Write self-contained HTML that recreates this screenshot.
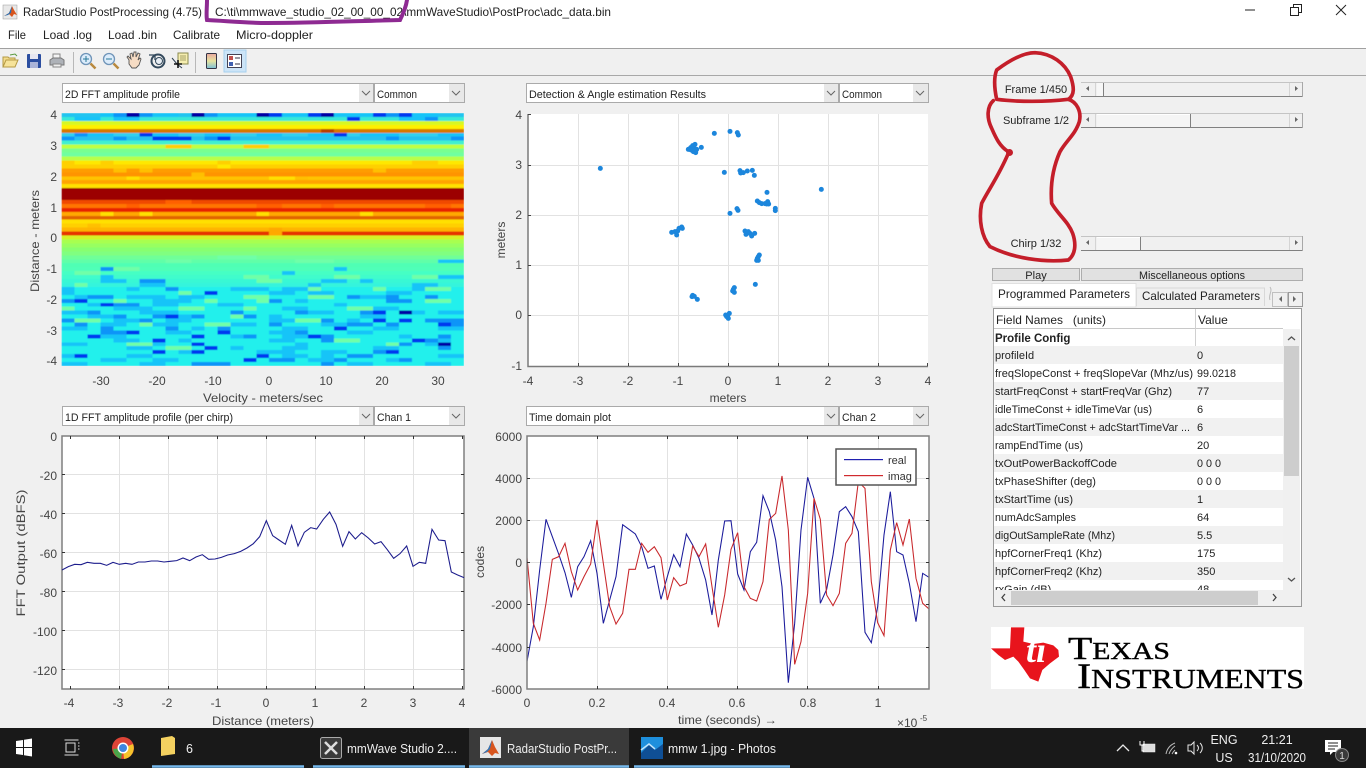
<!DOCTYPE html>
<html lang="en"><head><meta charset="utf-8"><title>RadarStudio PostProcessing</title>
<style>
html,body{margin:0;padding:0;width:1366px;height:768px;overflow:hidden;background:#f0f0f0}
svg{display:block}
text{font-family:"Liberation Sans",sans-serif}
.t{font-size:12px;fill:#444}
.d{font-size:11px;fill:#222}
.r{text-anchor:end}
.m{text-anchor:middle}
.c{font-size:11px;fill:#222}
.w{fill:#eee;font-size:12.5px}
.s{font-family:"Liberation Serif",serif}
</style></head><body>
<svg width="1366" height="768" viewBox="0 0 1366 768" xmlns="http://www.w3.org/2000/svg">
<defs>
<clipPath id="rowclip"><rect x="994" y="328" width="289" height="262"/></clipPath>
<clipPath id="plot2"><rect x="527" y="436" width="402" height="253"/></clipPath>
<clipPath id="hm"><rect x="61.500" y="113" width="402.500" height="253"/></clipPath>
<filter id="soft" x="-2%" y="-2%" width="104%" height="104%"><feGaussianBlur stdDeviation=".45"/></filter>
<g id="arrow"><path d="M-4-2l4 4 4-4" fill="none" stroke="#666" stroke-width="1"/></g>
</defs>

<!-- window chrome -->
<rect x="0" y="0" width="1366" height="48" fill="#fff"/>
<rect x="0" y="48" width="1366" height="1" fill="#a0a0a0"/>
<rect x="0" y="75" width="1366" height="1" fill="#a8a8a8"/>
<rect x="3" y="5" width="14" height="14" fill="#e8e8e8" stroke="#999" stroke-width=".5"/>
<path d="M4 16l5-3 3-7 2 4 3 5-3-1-2 3-3-3z" fill="#d8551e"/><path d="M4 16l5-3 3-7-1 7-3 2z" fill="#2a6fb0"/>
<text x="23" y="16" font-size="12" fill="#222" textLength="179" lengthAdjust="spacingAndGlyphs">RadarStudio PostProcessing (4.75)</text>
<text x="215" y="16" font-size="12" fill="#222" textLength="396" lengthAdjust="spacingAndGlyphs">C:\ti\mmwave_studio_02_00_00_02\mmWaveStudio\PostProc\adc_data.bin</text>
<path d="M1245 10h10" stroke="#222" stroke-width="1"/>
<path d="M1290.5 7.500h8v8h-8zM1293.500 7.500v-3h8v8h-3" fill="none" stroke="#222"/>
<path d="M1336 5l10 10M1346 5l-10 10" stroke="#222" stroke-width="1"/>
<g font-size="12" fill="#222">
<text x="8" y="39" textLength="18" lengthAdjust="spacingAndGlyphs">File</text>
<text x="43" y="39" textLength="49" lengthAdjust="spacingAndGlyphs">Load .log</text>
<text x="108" y="39" textLength="49" lengthAdjust="spacingAndGlyphs">Load .bin</text>
<text x="173" y="39" textLength="47" lengthAdjust="spacingAndGlyphs">Calibrate</text>
<text x="236" y="39" textLength="77" lengthAdjust="spacingAndGlyphs">Micro-doppler</text>
</g>

<!-- toolbar -->
<path d="M3 67V57h5l1 1h6v2" fill="#f3dc8c" stroke="#b59a45"/><path d="M3 67l3-7h12l-3 7z" fill="#f6e39a" stroke="#b59a45"/><path d="M10 55l5-1 2 2" fill="none" stroke="#5a9a40"/>
<rect x="27" y="54" width="14" height="14" rx="1" fill="#2b4ea0"/><rect x="30" y="54" width="8" height="5" fill="#e6e6f0"/><rect x="30" y="62" width="8" height="6" fill="#aab4d8"/>
<path d="M53 54h7v5h-7z" fill="#f4f4f4" stroke="#888"/><path d="M50 60l3-2h8l3 2v5H50z" fill="#aeb2b8" stroke="#777"/><path d="M53 64h8v3h-8z" fill="#eee" stroke="#888"/>
<rect x="73" y="52" width="1" height="21" fill="#b8b8b8"/>
<g fill="none"><circle cx="86" cy="59" r="5.500" fill="#dcecfb" stroke="#6f94b8" stroke-width="1.300"/><path d="M83 59h6M86 56v6" stroke="#2a7a9a"/><path d="M90.500 63.500l5 5" stroke="#b8893f" stroke-width="2.500"/></g>
<g fill="none"><circle cx="109" cy="59" r="5.500" fill="#dcecfb" stroke="#6f94b8" stroke-width="1.300"/><path d="M106 59h6" stroke="#2a7a9a"/><path d="M113.500 63.500l5 5" stroke="#b8893f" stroke-width="2.500"/></g>
<path d="M129 60l-2-3 1-1 3 3-1-5 2-1 1 4 1-5 2 0v5l2-4 2 1-2 6 2-2 1 1-2 6-3 3h-4l-3-4z" fill="#f6dcc4" stroke="#555" stroke-width=".9"/>
<circle cx="158" cy="61" r="6.500" fill="none" stroke="#33495c" stroke-width="2"/><circle cx="159" cy="61" r="3.500" fill="#e8eef4" stroke="#33495c"/><path d="M149 55h6v5" fill="none" stroke="#33495c" stroke-width="1.300"/>
<rect x="178" y="53" width="10" height="11" fill="#f6eeb0" stroke="#8a8a50"/><path d="M180 56h6M180 58h6M180 60h6" stroke="#8a8a50" stroke-width=".7"/><path d="M172 58l5 6 5 4" stroke="#345" fill="none"/><path d="M178 60v8M174 64h8" stroke="#111" stroke-width="1.600"/>
<rect x="195" y="52" width="1" height="21" fill="#b8b8b8"/>
<defs><linearGradient id="cb" x1="0" y1="0" x2="0" y2="1"><stop offset="0" stop-color="#e9a8a0"/><stop offset=".5" stop-color="#e8e4a0"/><stop offset="1" stop-color="#7cc0d8"/></linearGradient></defs>
<rect x="206.500" y="53.500" width="10" height="15" rx="1" fill="url(#cb)" stroke="#334"/>
<rect x="224" y="50" width="22" height="22" fill="#cce4f7" stroke="#a6cfee"/>
<rect x="227.500" y="54.500" width="14" height="13" fill="#fff" stroke="#445"/><rect x="229" y="56" width="4" height="4" fill="#c0504d"/><rect x="229" y="62" width="4" height="4" fill="#4060b0"/><path d="M235 58h5M235 64h5" stroke="#334"/>

<!-- dropdowns -->
<g fill="#fff" stroke="#aaa">
<rect x="62.500" y="83.500" width="311" height="19"/><rect x="374.500" y="83.500" width="90" height="19"/>
<rect x="526.500" y="83.500" width="312" height="19"/><rect x="839.500" y="83.500" width="89" height="19"/>
<rect x="62.500" y="406.500" width="311" height="19"/><rect x="374.500" y="406.500" width="90" height="19"/>
<rect x="526.500" y="406.500" width="312" height="19"/><rect x="839.500" y="406.500" width="89" height="19"/>
</g>
<g fill="#e8e8e8"><rect x="359" y="84" width="14" height="18"/><rect x="449" y="84" width="15" height="18"/><rect x="824" y="84" width="14" height="18"/><rect x="913" y="84" width="15" height="18"/><rect x="359" y="407" width="14" height="18"/><rect x="449" y="407" width="15" height="18"/><rect x="824" y="407" width="14" height="18"/><rect x="913" y="407" width="15" height="18"/></g>
<use href="#arrow" x="366" y="93"/><use href="#arrow" x="456" y="93"/><use href="#arrow" x="831" y="93"/><use href="#arrow" x="920" y="93"/>
<use href="#arrow" x="366" y="416"/><use href="#arrow" x="456" y="416"/><use href="#arrow" x="831" y="416"/><use href="#arrow" x="920" y="416"/>
<g class="d">
<text class="d" x="65" y="98" textLength="115" lengthAdjust="spacingAndGlyphs">2D FFT amplitude profile</text>
<text class="d" x="377" y="98" textLength="40" lengthAdjust="spacingAndGlyphs">Common</text>
<text class="d" x="529" y="98" textLength="177" lengthAdjust="spacingAndGlyphs">Detection &amp; Angle estimation Results</text>
<text class="d" x="842" y="98" textLength="40" lengthAdjust="spacingAndGlyphs">Common</text>
<text class="d" x="65" y="421" textLength="168" lengthAdjust="spacingAndGlyphs">1D FFT amplitude profile (per chirp)</text>
<text class="d" x="377" y="421" textLength="34" lengthAdjust="spacingAndGlyphs">Chan 1</text>
<text class="d" x="529" y="421" textLength="82" lengthAdjust="spacingAndGlyphs">Time domain plot</text>
<text class="d" x="842" y="421" textLength="34" lengthAdjust="spacingAndGlyphs">Chan 2</text>
</g>

<!-- heatmap -->
<g clip-path="url(#hm)"><g filter="url(#soft)">
<svg x="61.500" y="113" width="402.500" height="253" viewBox="0 0 31 64" preserveAspectRatio="none" shape-rendering="crispEdges">
<g>
<rect y="0" width="31" height="1" fill="#22c4f0"/><rect y="1" width="31" height="1" fill="#38e8d8"/><rect y="2" width="31" height="1" fill="#d8f820"/><rect y="3" width="31" height="1" fill="#fff000"/><rect y="4" width="31" height="1" fill="#d87800"/><rect y="5" width="31" height="1" fill="#30d0f0"/><rect y="6" width="31" height="1" fill="#28c0f0"/><rect y="7" width="31" height="1" fill="#40f0d0"/>
<rect y="8" width="31" height="1" fill="#c0ff40"/><rect y="9" width="31" height="1" fill="#78ff90"/><rect y="10" width="31" height="1" fill="#70ffa0"/><rect y="11" width="31" height="1" fill="#b8ff48"/><rect y="12" width="31" height="1" fill="#ffe800"/><rect y="13" width="31" height="1" fill="#ffd000"/><rect y="14" width="31" height="1" fill="#ff9c00"/><rect y="15" width="31" height="1" fill="#ff9400"/>
<rect y="16" width="31" height="1" fill="#ffc400"/><rect y="17" width="31" height="1" fill="#ffa400"/><rect y="18" width="31" height="1" fill="#ffe000"/><rect y="19" width="31" height="3" fill="#9c0000"/><rect y="22" width="31" height="1" fill="#f04800"/><rect y="23" width="31" height="1" fill="#ff7400"/>
<rect y="24" width="31" height="1" fill="#e82400"/><rect y="25" width="31" height="1" fill="#ffa800"/><rect y="26" width="31" height="1" fill="#e06400"/><rect y="27" width="31" height="1" fill="#ffe000"/><rect y="28" width="31" height="1" fill="#ffd000"/><rect y="29" width="31" height="1" fill="#ffb400"/><rect y="30" width="31" height="1" fill="#e63000"/><rect y="31" width="31" height="1" fill="#d4f428"/>
<rect y="32" width="31" height="1" fill="#a8ff50"/><rect y="33" width="31" height="1" fill="#98ff60"/><rect y="34" width="31" height="1" fill="#88ff70"/><rect y="35" width="31" height="1" fill="#80ff80"/><rect y="36" width="31" height="1" fill="#70ff98"/><rect y="37" width="31" height="1" fill="#60ffa8"/><rect y="38" width="31" height="1" fill="#50ffb4"/><rect y="39" width="31" height="1" fill="#50ffb8"/>
<rect y="40" width="31" height="1" fill="#44ffc4"/><rect y="41" width="31" height="1" fill="#40fccc"/><rect y="42" width="31" height="1" fill="#38f8d4"/><rect y="43" width="31" height="1" fill="#34f4dc"/><rect y="44" width="31" height="22" fill="#24f0ec"/>
</g>
<g fill="none" stroke-width="1">
<path stroke="#70ffa8" d="M8 37.500h2M12 36.500h3M18 37.500h3M4 39.500h2M1 40.500h2M14 41.500h2M21 41.500h2M27 41.500h2M15 42.500h2M1 43.500h1M18 44.500h2M24 44.500h1M9 45.500h1M28 44.500h2M14 46.500h2M19 46.500h2M4 47.500h1M11 47.500h1M15 47.500h1M0 49.500h1M9 49.500h2M14 49.500h1M22 49.500h2M13 51.500h2M18 52.500h2M28 47.500h2M1 52.500h2M6 53.500h1M11 53.500h2M21 57.500h2M5 58.500h2M8 59.500h2M25 58.500h2"/>
<path stroke="#18c4f8" d="M3 0.500h1M7 0.500h2M12 0.500h3M17 0.500h2M21 0.500h3M27 0.500h2M1 1.500h2M4 1.500h2M22 1.500h1M26 1.500h3M2 5.500h2M7 5.500h2M15 5.500h2M19 5.500h2M23 5.500h3M29 5.500h2M11 5.500h2M3 41.500h1M29 37.500h2M21 39.500h1M17 40.500h1M3 42.500h2M23 42.500h1M29 41.500h2M6 43.500h2M17 44.500h2M20 42.500h2M27 43.500h2M19 43.500h1M0 44.500h1M5 44.500h1M27 44.500h1M0 45.500h1M9 46.500h2M13 44.500h3M19 45.500h2M25 45.500h2M1 46.500h2M5 46.500h3M16 45.500h2M23 46.500h2M7 47.500h3M18 47.500h1M2 48.500h1M7 48.500h2M12 48.500h2M21 48.500h1M4 49.500h3M17 49.500h2M24 49.500h2M0 50.500h2M6 50.500h3M19 50.500h2M26 50.500h2M29 50.500h2M2 51.500h2M9 51.500h2M16 51.500h1M23 51.500h2M4 52.500h2M8 52.500h2M16 52.500h2M22 52.500h1M3 53.500h2M7 53.500h2M13 53.500h2M20 53.500h2M29 54.500h2M0 54.500h2M10 54.500h1M17 54.500h2M24 54.500h2M8 55.500h2M16 55.500h2M22 55.500h2M3 56.500h2M13 56.500h2M17 56.500h2M26 56.500h1M4 57.500h2M9 57.500h1M16 57.500h2M29 57.500h1M0 58.500h2M7 58.500h1M18 58.500h1M28 58.500h1M5 59.500h2M13 59.500h1M17 59.500h2M24 59.500h2M9 60.500h2M15 60.500h3M20 60.500h2M0 61.500h1M5 61.500h2M17 61.500h2M20 61.500h1M29 61.500h2M3 62.500h2M7 62.500h2M19 62.500h2M25 62.500h1M0 63.500h2M6 63.500h2M22 63.500h2M28 63.500h2"/>
<path stroke="#0c94f8" d="M4 0.500h1M6 0.500h1M11 0.500h1M25 0.500h1M28 1.500h1M0 6.500h1M1 5.500h1M4 6.500h1M11 6.500h1M25 6.500h1M30 6.500h1M3 39.500h1M6 42.500h2M8 44.500h1M0 47.500h1M2 46.500h2M22 46.500h1M25 47.500h2M28 46.500h1M4 48.500h2M16 47.500h1M25 46.500h1M13 50.500h1M2 50.500h1M4 51.500h1M7 51.500h2M10 51.500h1M14 51.500h1M18 50.500h1M23 50.500h1M29 52.500h2M0 52.500h1M1 53.500h1M6 52.500h1M16 53.500h1M20 52.500h1M25 53.500h1M28 52.500h1M30 53.500h1M3 54.500h1M8 54.500h1M12 54.500h1M22 53.500h2M3 55.500h2M14 56.500h1M18 55.500h1M29 56.500h1M20 56.500h1M20 57.500h1M28 57.500h1M26 58.500h1M29 59.500h1M24 60.500h1M22 61.500h2M26 62.500h1M10 63.500h3M16 62.500h2M21 62.500h1M20 63.500h1"/>
<path stroke="#0038f0" d="M16 0.500h1M19 0.500h1M24 0.500h1M26 0.500h1M22 1.500h1M21 5.500h1M6 5.500h1M7 6.500h3M12 6.500h1M11 45.500h1M1 47.500h1M3 48.500h1M8 51.500h1M24 50.500h1M24 52.500h1M26 52.500h1M21 54.500h1M2 56.500h1M5 55.500h1M7 57.500h1M10 56.500h1M12 55.500h1M19 56.500h1M27 57.500h1M10 58.500h1M11 59.500h1M7 60.500h1M10 60.500h1M1 61.500h1M15 61.500h1M14 62.500h1M25 60.500h1M29 53.500h1"/>
<path stroke="#0000a4" d="M5 0.500h1M10 0.500h1M15 0.500h1M20 0.500h1M26 50.500h1M29 58.500h1"/>
<path stroke="#ffa800" d="M16 29.500h1M16 30.500h1"/>
<path stroke="#ffc000" d="M2 28.500h1M6 14.500h1M4 14.500h1M10 15.500h1M18 16.500h1M24 14.500h1"/>
<path stroke="#ff6000" d="M5 23.500h1M15 23.500h2M20 23.500h1M28 23.500h2M8 22.500h2"/>
<path stroke="#ffe000" d="M3 25.500h1M15 25.500h1M23 25.500h1M6 25.500h1M5 16.500h1M16 16.500h2"/>
<path stroke="#ffe800" d="M12 13.500h1M7 12.500h1M22 12.500h2"/>
<path stroke="#ffd000" d="M0 12.500h1M3 12.500h1M12 12.500h1M27 12.500h2M8 8.500h2M14 8.500h2"/>
<path stroke="#b84000" d="M20 4.500h1"/>
</g>
</svg>
</g></g>
<g class="t">
<text class="t r" x="57" y="119">4</text><text class="t r" x="57" y="150">3</text><text class="t r" x="57" y="181">2</text><text class="t r" x="57" y="212">1</text><text class="t r" x="57" y="242">0</text><text class="t r" x="57" y="273">-1</text><text class="t r" x="57" y="304">-2</text><text class="t r" x="57" y="335">-3</text><text class="t r" x="57" y="365">-4</text>
<text class="t m" x="101" y="385">-30</text><text class="t m" x="157" y="385">-20</text><text class="t m" x="213" y="385">-10</text><text class="t m" x="269" y="385">0</text><text class="t m" x="326" y="385">10</text><text class="t m" x="382" y="385">20</text><text class="t m" x="438" y="385">30</text>
<text class="t m" x="263" y="402" textLength="120" lengthAdjust="spacingAndGlyphs">Velocity - meters/sec</text>
<text class="t m" transform="translate(39,241) rotate(-90)" textLength="102" lengthAdjust="spacingAndGlyphs">Distance - meters</text>
</g>

<!-- scatter plot -->
<rect x="528" y="114" width="400" height="252" fill="#fff"/>
<path d="M578.500 114v252M628.500 114v252M678.500 114v252M728.500 114v252M778.500 114v252M828.500 114v252M878.500 114v252M528 165.500h400M528 215.500h400M528 265.500h400M528 315.500h400" stroke="#e2e2e2" fill="none"/>
<path d="M528 114v252.500h400" stroke="#7a7a7a" stroke-width="1.500" fill="none"/>
<path d="M528 114.500h3M528 165.500h3M528 215.500h3M528 265.500h3M528 315.500h3M578.500 366v-3M628.500 366v-3M678.500 366v-3M728.500 366v-3M778.500 366v-3M828.500 366v-3M878.500 366v-3M927.500 366v-3" stroke="#444"/>
<g fill="#1c86dc" transform="translate(500,105) scale(.33333)">
<circle cx="301" cy="190" r="7.500"/><circle cx="643" cy="85" r="7.500"/><circle cx="690" cy="79" r="7.500"/><circle cx="712" cy="83" r="7.500"/><circle cx="715" cy="90" r="7.500"/><circle cx="604" cy="127" r="7.500"/><circle cx="565" cy="133" r="7.500"/><circle cx="572" cy="128" r="7.500"/><circle cx="578" cy="122" r="7.500"/><circle cx="585" cy="118" r="7.500"/><circle cx="573" cy="135" r="7.500"/><circle cx="580" cy="140" r="7.500"/><circle cx="587" cy="143" r="7.500"/><circle cx="583" cy="130" r="7.500"/><circle cx="590" cy="133" r="7.500"/><circle cx="673" cy="202" r="7.500"/><circle cx="720" cy="197" r="7.500"/><circle cx="722" cy="204" r="7.500"/><circle cx="730" cy="203" r="7.500"/><circle cx="742" cy="198" r="7.500"/><circle cx="757" cy="196" r="7.500"/><circle cx="763" cy="211" r="7.500"/><circle cx="801" cy="262" r="7.500"/><circle cx="964" cy="253" r="7.500"/><circle cx="772" cy="288" r="7.500"/><circle cx="778" cy="293" r="7.500"/><circle cx="785" cy="296" r="7.500"/><circle cx="795" cy="296" r="7.500"/><circle cx="803" cy="290" r="7.500"/><circle cx="800" cy="297" r="7.500"/><circle cx="806" cy="297" r="7.500"/><circle cx="826" cy="310" r="7.500"/><circle cx="826" cy="317" r="7.500"/><circle cx="690" cy="325" r="7.500"/><circle cx="711" cy="311" r="7.500"/><circle cx="714" cy="316" r="7.500"/><circle cx="515" cy="382" r="7.500"/><circle cx="525" cy="380" r="7.500"/><circle cx="530" cy="390" r="7.500"/><circle cx="533" cy="378" r="7.500"/><circle cx="537" cy="370" r="7.500"/><circle cx="545" cy="366" r="7.500"/><circle cx="547" cy="370" r="7.500"/><circle cx="735" cy="378" r="7.500"/><circle cx="745" cy="380" r="7.500"/><circle cx="738" cy="388" r="7.500"/><circle cx="750" cy="385" r="7.500"/><circle cx="755" cy="393" r="7.500"/><circle cx="764" cy="385" r="7.500"/><circle cx="778" cy="450" r="7.500"/><circle cx="775" cy="455" r="7.500"/><circle cx="772" cy="460" r="7.500"/><circle cx="770" cy="466" r="7.500"/><circle cx="775" cy="466" r="7.500"/><circle cx="766" cy="538" r="7.500"/><circle cx="703" cy="548" r="7.500"/><circle cx="700" cy="553" r="7.500"/><circle cx="698" cy="558" r="7.500"/><circle cx="703" cy="562" r="7.500"/><circle cx="578" cy="571" r="7.500"/><circle cx="583" cy="574" r="7.500"/><circle cx="576" cy="575" r="7.500"/><circle cx="592" cy="583" r="7.500"/><circle cx="688" cy="625" r="7.500"/><circle cx="683" cy="632" r="7.500"/><circle cx="680" cy="635" r="7.500"/><circle cx="685" cy="640" r="7.500"/><circle cx="677" cy="630" r="7.500"/>
</g>
<g>
<text class="t r" x="522" y="119">4</text><text class="t r" x="522" y="169">3</text><text class="t r" x="522" y="219">2</text><text class="t r" x="522" y="269">1</text><text class="t r" x="522" y="319">0</text><text class="t r" x="522" y="370">-1</text>
<text class="t m" x="528" y="385">-4</text><text class="t m" x="578" y="385">-3</text><text class="t m" x="628" y="385">-2</text><text class="t m" x="678" y="385">-1</text><text class="t m" x="728" y="385">0</text><text class="t m" x="778" y="385">1</text><text class="t m" x="828" y="385">2</text><text class="t m" x="878" y="385">3</text><text class="t m" x="928" y="385">4</text>
<text class="t m" x="728" y="402">meters</text>
<text class="t m" transform="translate(505,240) rotate(-90)">meters</text>
</g>

<!-- FFT plot -->
<rect x="62" y="436" width="402" height="253" fill="#fff"/>
<path d="M119.500 436v253M168.500 436v253M217.500 436v253M266.500 436v253M315.500 436v253M364.500 436v253M413.500 436v253M62 474.500h402M62 513.500h402M62 552.500h402M62 591.500h402M62 630.500h402M62 669.500h402" stroke="#e2e2e2" fill="none"/>
<rect x="62" y="436" width="402" height="253" fill="none" stroke="#7f7f7f" stroke-width="1.500"/>
<path d="M70.500 436v3M119.500 436v3M168.500 436v3M217.500 436v3M266.500 436v3M315.500 436v3M364.500 436v3M413.500 436v3M462.500 436v3M70.500 689v-3M119.500 689v-3M168.500 689v-3M217.500 689v-3M266.500 689v-3M315.500 689v-3M364.500 689v-3M413.500 689v-3M462.500 689v-3M62 474.500h3M62 513.500h3M62 552.500h3M62 591.500h3M62 630.500h3M62 669.500h3M464 474.500h-3M464 513.500h-3M464 552.500h-3M464 591.500h-3M464 630.500h-3M464 669.500h-3" stroke="#333" fill="none"/>
<polyline transform="translate(30,425) scale(.33333)" fill="none" stroke="#1c1c8c" stroke-width="3.200" points="96,435 115,425 134,418 153,419 172,412 192,415 211,415 230,421 249,412 268,418 287,415 306,418 325,411 345,411 364,408 383,408 402,411 421,409 440,407 459,399 479,407 498,396 517,389 536,403 555,402 574,397 593,390 613,386 632,379 651,369 670,356 689,335 709,287 728,332 747,345 766,358 785,301 804,363 823,322 842,308 860,312 880,283 899,261 918,298 938,364 957,320 976,342 995,323 1015,339 1034,357 1053,350 1072,374 1091,400 1110,386 1130,363 1149,424 1168,412 1187,415 1206,313 1226,345 1245,347 1264,441 1283,450 1302,458"/>
<g>
<text class="t r" x="57" y="441">0</text><text class="t r" x="57" y="480">-20</text><text class="t r" x="57" y="519">-40</text><text class="t r" x="57" y="558">-60</text><text class="t r" x="57" y="597">-80</text><text class="t r" x="57" y="636">-100</text><text class="t r" x="57" y="675">-120</text>
<text class="t m" x="69" y="707">-4</text><text class="t m" x="118" y="707">-3</text><text class="t m" x="167" y="707">-2</text><text class="t m" x="216" y="707">-1</text><text class="t m" x="266" y="707">0</text><text class="t m" x="315" y="707">1</text><text class="t m" x="364" y="707">2</text><text class="t m" x="413" y="707">3</text><text class="t m" x="462" y="707">4</text>
<text class="t m" x="263" y="725" textLength="102" lengthAdjust="spacingAndGlyphs">Distance (meters)</text>
<text class="t m" transform="translate(25,553) rotate(-90)" textLength="127" lengthAdjust="spacingAndGlyphs">FFT Output (dBFS)</text>
</g>

<!-- time plot -->
<rect x="527" y="436" width="402" height="253" fill="#fff"/>
<path d="M597.500 436v253M667.500 436v253M737.500 436v253M807.500 436v253M878.500 436v253M527 478.500h402M527 520.500h402M527 562.500h402M527 604.500h402M527 647.500h402" stroke="#e2e2e2" fill="none"/>
<g clip-path="url(#plot2)"><g transform="translate(490,430) scale(.33333)" fill="none" stroke-width="3.200">
<polyline stroke="#1c1c9c" points="110,700 130,590 149,420 168,268 187,320 206,372 225,428 244,502 263,410 282,380 302,332 321,430 340,580 359,510 378,440 398,284 417,298 436,312 455,350 474,415 493,408 513,508 532,440 551,374 570,410 589,312 608,345 627,385 647,450 666,555 685,390 704,273 723,272 743,432 762,480 781,365 800,337 819,197 838,245 857,330 876,470 895,758 914,580 933,300 953,142 972,205 991,520 1010,478 1029,375 1048,245 1067,230 1086,260 1105,305 1125,607 1144,638 1163,530 1182,315 1201,185 1220,365 1239,375 1258,460 1278,575 1298,430 1317,442"/>
<polyline stroke="#c8282c" points="110,372 130,580 149,630 168,520 187,388 206,380 225,340 244,425 263,480 282,440 302,402 321,270 340,400 359,530 378,582 398,550 417,418 436,418 455,340 474,367 493,350 513,383 532,510 551,443 570,468 589,460 608,348 627,380 647,342 666,470 685,592 704,495 723,358 743,308 762,470 781,505 800,513 819,455 838,268 857,250 876,138 895,300 914,703 933,635 953,490 972,205 991,268 1010,495 1029,527 1048,490 1067,340 1086,310 1105,155 1125,175 1144,455 1163,578 1182,617 1201,360 1220,278 1239,345 1258,267 1278,445 1298,520 1317,537"/>
</g></g>
<rect x="527" y="436" width="402" height="253" fill="none" stroke="#7f7f7f" stroke-width="1.500"/>
<path d="M597.500 436v3M667.500 436v3M737.500 436v3M807.500 436v3M878.500 436v3M597.500 689v-3M667.500 689v-3M737.500 689v-3M807.500 689v-3M878.500 689v-3M527 478.500h3M527 520.500h3M527 562.500h3M527 604.500h3M527 647.500h3M929 478.500h-3M929 520.500h-3M929 562.500h-3M929 604.500h-3M929 647.500h-3" stroke="#333" fill="none"/>
<rect x="836" y="449" width="80" height="36" fill="#fff" stroke="#555" stroke-width="1.500"/>
<rect x="844" y="459" width="39" height="1.200" fill="#2020b0"/><rect x="844" y="475" width="39" height="1.200" fill="#d02a2e"/>
<text x="888" y="464" font-size="11" fill="#333">real</text><text x="888" y="480" font-size="11" fill="#333">imag</text>
<g>
<text class="t r" x="522" y="441">6000</text><text class="t r" x="522" y="483">4000</text><text class="t r" x="522" y="525">2000</text><text class="t r" x="522" y="567">0</text><text class="t r" x="522" y="609">-2000</text><text class="t r" x="522" y="652">-4000</text><text class="t r" x="522" y="694">-6000</text>
<text class="t m" x="527" y="707">0</text><text class="t m" x="597" y="707">0.2</text><text class="t m" x="667" y="707">0.4</text><text class="t m" x="737" y="707">0.6</text><text class="t m" x="808" y="707">0.8</text><text class="t m" x="878" y="707">1</text>
<text class="t" x="678" y="724" textLength="99" lengthAdjust="spacingAndGlyphs">time  (seconds) →</text>
<text class="t" x="897" y="727" font-size="12">×10</text><text x="920" y="721" font-size="8" fill="#444">-5</text>
<text class="t m" transform="translate(484,562) rotate(-90)">codes</text>
</g>

<!-- sliders -->
<g class="c">
<text class="c m" x="1036" y="93">Frame 1/450</text>
<text class="c m" x="1036" y="124">Subframe 1/2</text>
<text class="c m" x="1036" y="247">Chirp 1/32</text>
</g>
<g>
<rect x="1081" y="82" width="222" height="14" fill="#f0f0f0"/><path d="M1081 82.500h222" stroke="#c4c4c4"/><path d="M1081 96.500h222" stroke="#808080"/>
<path d="M1095.500 83v13M1289.500 83v13" stroke="#d4d4d4"/><path d="M1302.500 82v15" stroke="#a8a8a8"/>
<rect x="1097" y="83" width="7" height="13" fill="#f7f7f7"/><path d="M1103.500 83v13" stroke="#808080"/>
<path d="M1089 86v5l-3-2.500zM1295 86v5l3-2.500z" fill="#666"/>
</g>
<g>
<rect x="1081" y="113" width="222" height="14" fill="#f0f0f0"/><path d="M1081 113.500h222" stroke="#c4c4c4"/><path d="M1081 127.500h222" stroke="#808080"/>
<path d="M1095.500 114v13M1289.500 114v13" stroke="#d4d4d4"/><path d="M1302.500 113v15" stroke="#a8a8a8"/>
<rect x="1097" y="114" width="94" height="13" fill="#f5f5f5"/><path d="M1097 114.500h94" stroke="#fff"/><path d="M1190.500 114v13" stroke="#808080"/>
<path d="M1089 117v5l-3-2.500zM1295 117v5l3-2.500z" fill="#666"/>
</g>
<g>
<rect x="1081" y="236" width="222" height="14" fill="#f0f0f0"/><path d="M1081 236.500h222" stroke="#c4c4c4"/><path d="M1081 250.500h222" stroke="#808080"/>
<path d="M1095.500 237v13M1289.500 237v13" stroke="#d4d4d4"/><path d="M1302.500 236v15" stroke="#a8a8a8"/>
<rect x="1097" y="237" width="44" height="13" fill="#f5f5f5"/><path d="M1097 237.500h44" stroke="#fff"/><path d="M1140.500 237v13" stroke="#808080"/>
<path d="M1089 240v5l-3-2.500zM1295 240v5l3-2.500z" fill="#666"/>
</g>
<rect x="992.500" y="268.500" width="87" height="12" fill="#e1e1e1" stroke="#adadad"/>
<rect x="1081.500" y="268.500" width="221" height="12" fill="#e1e1e1" stroke="#adadad"/>
<text class="c m" x="1036" y="279">Play</text>
<text class="c m" x="1192" y="279" textLength="106" lengthAdjust="spacingAndGlyphs">Miscellaneous options</text>

<!-- tabs -->
<path d="M1136.500 306v-18h128v18" fill="#f0f0f0" stroke="#d8d8d8"/>
<path d="M992 307v-23.500h144v23.500z" fill="#fff" stroke="#e0e0e0"/>
<path d="M1270 287c3 4-2 8 0 13" stroke="#bbb" fill="none"/>
<rect x="1272.500" y="292.500" width="15" height="14" fill="#f0f0f0" stroke="#c0c0c0"/><rect x="1288.500" y="292.500" width="14" height="14" fill="#f0f0f0" stroke="#9a9a9a"/>
<path d="M1282 296v6l-3-3zM1293 296v6l3-3z" fill="#666"/>
<text x="998" y="298" font-size="12" fill="#222" textLength="132" lengthAdjust="spacingAndGlyphs">Programmed Parameters</text>
<text x="1142" y="300" font-size="12" fill="#222" textLength="118" lengthAdjust="spacingAndGlyphs">Calculated Parameters</text>

<!-- table -->
<rect x="993.500" y="308.500" width="308" height="298" fill="#fff" stroke="#9a9a9a"/>
<path d="M994 328.500h289" stroke="#c8c8c8"/>
<path d="M1195.500 309v37" stroke="#d0d0d0"/>
<g fill="#f1f1f1">
<rect x="994" y="346" width="289" height="18"/><rect x="994" y="382" width="289" height="18"/><rect x="994" y="418" width="289" height="18"/><rect x="994" y="454" width="289" height="18"/><rect x="994" y="490" width="289" height="18"/><rect x="994" y="526" width="289" height="18"/><rect x="994" y="562" width="289" height="18"/>
</g>
<text x="996" y="324" font-size="12" fill="#222" textLength="110" lengthAdjust="spacingAndGlyphs" xml:space="preserve">Field Names   (units)</text>
<text x="1198" y="324" font-size="12" fill="#222">Value</text>
<text x="995" y="342" font-size="11.500" font-weight="bold" fill="#222">Profile Config</text>
<g font-size="11" fill="#222" clip-path="url(#rowclip)">
<text x="995" y="359">profileId</text><text x="1197" y="359">0</text>
<text x="995" y="377" textLength="198" lengthAdjust="spacingAndGlyphs">freqSlopeConst + freqSlopeVar (Mhz/us)</text><text x="1197" y="377" textLength="39" lengthAdjust="spacingAndGlyphs">99.0218</text>
<text x="995" y="395" textLength="177" lengthAdjust="spacingAndGlyphs">startFreqConst + startFreqVar (Ghz)</text><text x="1197" y="395">77</text>
<text x="995" y="413" textLength="157" lengthAdjust="spacingAndGlyphs">idleTimeConst + idleTimeVar (us)</text><text x="1197" y="413">6</text>
<text x="995" y="431" textLength="195" lengthAdjust="spacingAndGlyphs">adcStartTimeConst + adcStartTimeVar ...</text><text x="1197" y="431">6</text>
<text x="995" y="449" textLength="88" lengthAdjust="spacingAndGlyphs">rampEndTime (us)</text><text x="1197" y="449">20</text>
<text x="995" y="467" textLength="122" lengthAdjust="spacingAndGlyphs">txOutPowerBackoffCode</text><text x="1197" y="467" textLength="24" lengthAdjust="spacingAndGlyphs">0 0 0</text>
<text x="995" y="485" textLength="101" lengthAdjust="spacingAndGlyphs">txPhaseShifter (deg)</text><text x="1197" y="485" textLength="24" lengthAdjust="spacingAndGlyphs">0 0 0</text>
<text x="995" y="503" textLength="78" lengthAdjust="spacingAndGlyphs">txStartTime (us)</text><text x="1197" y="503">1</text>
<text x="995" y="521" textLength="81" lengthAdjust="spacingAndGlyphs">numAdcSamples</text><text x="1197" y="521">64</text>
<text x="995" y="539" textLength="120" lengthAdjust="spacingAndGlyphs">digOutSampleRate (Mhz)</text><text x="1197" y="539">5.5</text>
<text x="995" y="557" textLength="107" lengthAdjust="spacingAndGlyphs">hpfCornerFreq1 (Khz)</text><text x="1197" y="557">175</text>
<text x="995" y="575" textLength="107" lengthAdjust="spacingAndGlyphs">hpfCornerFreq2 (Khz)</text><text x="1197" y="575">350</text>
<text x="995" y="593">rxGain (dB)</text><text x="1197" y="593">48</text>
</g>
<rect x="1283" y="329" width="17" height="261" fill="#f0f0f0"/>
<rect x="1284" y="346" width="15" height="130" fill="#cdcdcd"/>
<path d="M1288 340l3.500-3 3.500 3M1288 578l3.500 3 3.500-3" fill="none" stroke="#555" stroke-width="1.300"/>
<rect x="994" y="590" width="307" height="16" fill="#f0f0f0"/>
<rect x="1011" y="591" width="247" height="14" fill="#cdcdcd"/>
<path d="M1005 594l-3 3.500 3 3.500M1273 594l3 3.500-3 3.500" fill="none" stroke="#444" stroke-width="1.300"/>

<!-- logo -->
<rect x="991" y="627" width="313" height="62" fill="#fff"/>
<polygon transform="translate(985,620) scale(.33333)" fill="#e8141c" points="78,22 118,22 115,65 145,72 175,68 205,76 220,90 222,110 195,130 172,150 160,185 135,175 118,150 100,125 85,110 60,120 40,105 18,85 75,85"/>
<text class="s" x="1036" y="662" font-size="36" font-style="italic" font-weight="bold" fill="#fff" text-anchor="middle">ti</text>
<g fill="#000" stroke="#000" stroke-width=".4">
<text class="s" x="1068" y="659" textLength="102" lengthAdjust="spacingAndGlyphs"><tspan font-size="32">T</tspan><tspan font-size="24">EXAS</tspan></text>
<text class="s" x="1077" y="688" textLength="227" lengthAdjust="spacingAndGlyphs"><tspan font-size="36">I</tspan><tspan font-size="27">NSTRUMENTS</tspan></text>
</g>

<!-- annotations -->
<path d="M207 0C207 8 206 15 207 20C227 21 247 23 267 23C312 23 357 21 400 20C403 14 406 7 407 0" fill="none" stroke="#8e2a92" stroke-width="4" stroke-linecap="round"/>
<g transform="translate(980,40) scale(.33333)" fill="none" stroke="#c41e2a" stroke-width="11" stroke-linecap="round" stroke-linejoin="round">
<path d="M50 178C42 140 42 110 50 90C90 60 130 38 165 38C215 40 255 70 272 110C282 140 285 165 265 178C200 186 110 186 50 178Z"/>
<path d="M40 182C20 200 20 235 35 265C48 295 60 320 85 335"/>
<path d="M265 178C290 185 305 215 298 245C285 285 260 300 240 335C220 380 210 430 215 490C235 525 265 545 278 580C290 615 285 645 265 660C190 668 100 655 30 620C5 590 -5 540 5 490C25 450 55 410 85 340"/>
</g>
<circle cx="1009.500" cy="152.500" r="3.500" fill="#c41e2a"/>

<!-- taskbar -->
<rect x="0" y="728" width="1366" height="40" fill="#191919"/>
<rect x="469" y="728" width="160" height="40" fill="#3a3a3a"/>
<path d="M152 766.500h152M313 766.500h152M469 766.500h160M634 766.500h156" stroke="#76b9ed" stroke-width="2.500" fill="none"/>
<path d="M16 741l7-1v7h-7zM24 739.800l8-1.300v8.500h-8zM16 748h7v7l-7-1zM24 748h8v8.500l-8-1.300z" fill="#fff"/>
<path d="M64.500 740h14M64.500 755h14M66 743h9v9h-9zM78 743h1.500M78 746h1.500M78 749h1.500" fill="none" stroke="#ddd"/>
<circle cx="123" cy="748" r="11" fill="#de4437"/><path d="M123 748l-10 1a11 11 0 0 0 8 10z" fill="#4aa54a"/><path d="M123 748l10-4a11 11 0 0 1-9 15z" fill="#f5c32c"/><circle cx="123" cy="748" r="5.500" fill="#fff"/><circle cx="123" cy="748" r="4" fill="#3f86e0"/>
<path d="M161 738l11-2 3 2v16l-14 2z" fill="#f4d160"/>
<text class="w" x="186" y="753">6</text>
<rect x="320.500" y="737.500" width="21" height="21" rx="2" fill="#3a3a3a" stroke="#aaa"/><path d="M325 742l12 12M337 742l-12 12" stroke="#ddd" stroke-width="2.500"/>
<text class="w" x="347" y="753" textLength="110" lengthAdjust="spacingAndGlyphs">mmWave Studio 2....</text>
<rect x="480" y="737" width="21" height="21" fill="#e6e6e6"/><path d="M482 754l6-5 4-9 3 7 4 7-4-1-3 3-4-4z" fill="#d8551e"/><path d="M482 754l6-5 4-9-2 9-3 3z" fill="#3176b8"/>
<text class="w" x="507" y="753" textLength="110" lengthAdjust="spacingAndGlyphs">RadarStudio PostPr...</text>
<rect x="641" y="737" width="22" height="22" fill="#1e8fdc"/><path d="M641 753l8-8 6 5 8-6v15h-22z" fill="#0f4f95"/><path d="M641 750l8-6 6 5" fill="none" stroke="#bfe4fb" stroke-width="1.500"/>
<text class="w" x="668" y="753" textLength="108" lengthAdjust="spacingAndGlyphs">mmw 1.jpg - Photos</text>
<path d="M1117 751l6-6 6 6" fill="none" stroke="#e8e8e8" stroke-width="1.300"/>
<rect x="1143" y="744" width="12" height="8" fill="#ddd" stroke="#eee" stroke-width=".5"/><path d="M1140 741v4h4v-4M1142 745v6h2" stroke="#fff" fill="none"/>
<path d="M1166 754c1-5 4-9 9-11M1169 754c1-3 3-6 6-8M1172 754c1-2 2-3 3-4" fill="none" stroke="#bbb"/><circle cx="1176" cy="753" r="1.300" fill="#fff"/>
<path d="M1188 745h3l3-3v12l-3-3h-3zM1197 745c2 2 2 4 0 6M1200 743c3 3 3 7 0 10" fill="none" stroke="#e8e8e8"/>
<text class="w m" x="1224" y="744">ENG</text>
<text class="w m" x="1224" y="762">US</text>
<text class="w m" x="1277" y="744">21:21</text>
<text class="w m" x="1277" y="762" textLength="58" lengthAdjust="spacingAndGlyphs">31/10/2020</text>
<path d="M1325 740h16v12h-8l-3 3v-3h-5z" fill="#fff"/><path d="M1328 743h10M1328 746h10M1328 749h7" stroke="#222"/>
<circle cx="1342" cy="755" r="6.500" fill="#3a3a3a" stroke="#888"/><text x="1342" y="759" font-size="10" fill="#ddd" text-anchor="middle">1</text>
</svg>
</body></html>
